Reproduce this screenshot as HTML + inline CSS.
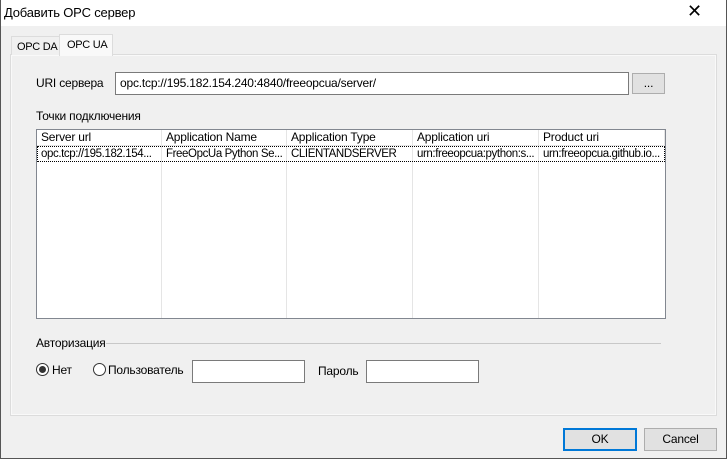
<!DOCTYPE html><html><head><style>
*{box-sizing:border-box}body{margin:0;width:727px;height:459px;background:#f0f0f0;font-family:"Liberation Sans",sans-serif;font-size:12px;color:#000;position:relative;overflow:hidden;letter-spacing:-0.2px}
.a{position:absolute;white-space:nowrap}
.tb{background:#fff;border:1px solid #7a7a7a}
.btn{background:#e1e1e1;border:1px solid #adadad;text-align:center}
.col{position:absolute;top:0;bottom:0;border-left:1px solid #e5e5e5}
.h{position:absolute;top:0;height:16px;border-right:1px solid #e5e5e5;border-bottom:1px solid #e5e5e5;padding-left:4px;line-height:15px;white-space:nowrap;overflow:hidden}
.c{position:absolute;top:17px;height:15px;padding-left:4px;line-height:14px;white-space:nowrap;overflow:hidden;font-size:11.5px;letter-spacing:-0.4px}
.tab{font-size:11px;letter-spacing:-0.3px}
</style></head><body>
<div class="a" style="left:0;top:0;width:1px;height:459px;background:#555"></div>
<div class="a" style="right:0;top:0;width:1px;height:459px;background:#555"></div>
<div class="a" style="left:0;bottom:0;width:727px;height:1px;background:#555"></div>
<div class="a" style="left:1px;top:0;width:725px;height:26px;background:#fff"></div>
<div class="a" style="left:4px;top:5px;font-size:13px">Добавить OPC сервер</div>
<div class="a" style="left:687px;top:1px;font-size:18px;font-weight:300">✕</div>
<div class="a" style="left:10px;top:54px;width:707px;height:362px;background:#f9f9f9;border:1px solid #dcdcdc"></div>
<div class="a" style="left:12px;top:56px;width:703px;height:358px;background:#f0f0f0"></div>
<div class="a tab" style="left:11px;top:36px;width:49px;height:19px;border:1px solid #dcdcdc;border-bottom:none;background:#f0f0f0;padding:4px 0 0 5px">OPC DA</div>
<div class="a tab" style="left:59px;top:34px;width:54px;height:22px;border:1px solid #dcdcdc;border-bottom:none;background:#f9f9f9;padding:4px 0 0 7px">OPC UA</div>
<div class="a" style="left:36px;top:76px">URI сервера</div>
<div class="a tb" style="left:115px;top:72px;width:514px;height:23px;padding:3px 0 0 4px">opc.tcp://195.182.154.240:4840/freeopcua/server/</div>
<div class="a btn" style="left:632px;top:73px;width:33px;height:21px;line-height:19px">...</div>
<div class="a" style="left:36px;top:109px">Точки подключения</div>
<div class="a" style="left:36px;top:129px;width:630px;height:190px;background:#fff;border:1px solid #828790">
<div class="col" style="left:124px"></div><div class="col" style="left:249px"></div><div class="col" style="left:375px"></div><div class="col" style="left:501px"></div>
<div class="h" style="left:0;width:125px">Server url</div><div class="h" style="left:125px;width:125px">Application Name</div><div class="h" style="left:250px;width:126px">Application Type</div><div class="h" style="left:376px;width:126px">Application uri</div><div class="h" style="left:502px;width:126px">Product uri</div>
<div class="a" style="left:0;top:16px;width:628px;height:16px;border:1px dotted #000"></div>
<div class="c" style="left:0;width:124px">opc.tcp://195.182.154...</div><div class="c" style="left:125px;width:124px">FreeOpcUa Python Se...</div><div class="c" style="left:250px;width:125px">CLIENTANDSERVER</div><div class="c" style="left:376px;width:125px">urn:freeopcua:python:s...</div><div class="c" style="left:502px;width:125px">urn:freeopcua.github.io...</div>
</div>
<div class="a" style="left:36px;top:336px">Авторизация</div>
<div class="a" style="left:106px;top:343px;width:555px;border-top:1px solid #c8c8c8"></div>
<div class="a" style="left:36px;top:363px;width:13px;height:13px;border:1px solid #333;border-radius:50%;background:#fff"><div class="a" style="left:2px;top:2px;width:7px;height:7px;border-radius:50%;background:#333"></div></div>
<div class="a" style="left:52px;top:363px">Нет</div>
<div class="a" style="left:93px;top:363px;width:13px;height:13px;border:1px solid #333;border-radius:50%;background:#fff"></div>
<div class="a" style="left:108px;top:363px">Пользователь</div>
<div class="a tb" style="left:192px;top:360px;width:113px;height:23px"></div>
<div class="a" style="left:318px;top:364px">Пароль</div>
<div class="a tb" style="left:366px;top:360px;width:113px;height:23px"></div>
<div class="a btn" style="left:563px;top:428px;width:74px;height:23px;border:2px solid #0078d7;line-height:19px">OK</div>
<div class="a btn" style="left:644px;top:428px;width:73px;height:23px;line-height:21px">Cancel</div>
</body></html>
